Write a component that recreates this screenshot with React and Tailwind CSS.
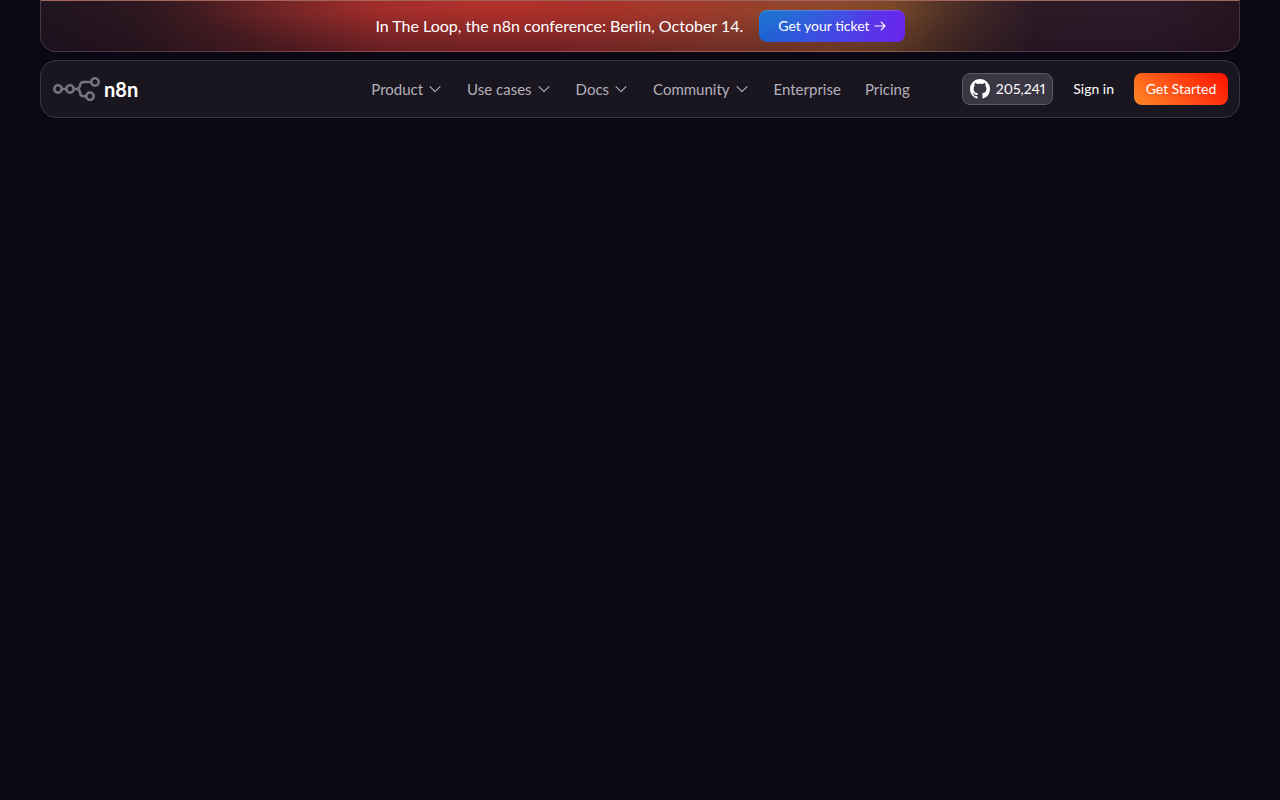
const menu = [
  { label: 'Product', hasChildren: true },
  { label: 'Use cases', hasChildren: true },
  { label: 'Docs', hasChildren: true },
  { label: 'Community', hasChildren: true },
  { label: 'Enterprise', href: '#enterprise' },
  { label: 'Pricing', href: '#pricing' },
]

function Chevron() {
  return (
    <svg viewBox="0 0 16 16" className="w-4 h-4" fill="none" stroke="currentColor" strokeWidth="1.1" strokeLinecap="round" strokeLinejoin="round" aria-hidden="true">
      <path d="M3 5.6 8 10.6l5-5" />
    </svg>
  )
}

function GithubMark() {
  return (
    <svg viewBox="0 0 16 16" className="w-5 h-5" fill="currentColor" aria-hidden="true">
      <path d="M8 0C3.58 0 0 3.58 0 8c0 3.54 2.29 6.53 5.47 7.59.4.07.55-.17.55-.38 0-.19-.01-.82-.01-1.49-2.01.37-2.53-.49-2.69-.94-.09-.23-.48-.94-.82-1.13-.28-.15-.68-.52-.01-.53.63-.01 1.08.58 1.23.82.72 1.21 1.87.87 2.33.66.07-.52.28-.87.51-1.07-1.78-.2-3.64-.89-3.64-3.95 0-.87.31-1.59.82-2.15-.08-.2-.36-1.02.08-2.12 0 0 .67-.21 2.2.82.64-.18 1.32-.27 2-.27s1.36.09 2 .27c1.53-1.04 2.2-.82 2.2-.82.44 1.1.16 1.92.08 2.12.51.56.82 1.27.82 2.15 0 3.07-1.87 3.75-3.65 3.95.29.25.54.73.54 1.48 0 1.07-.01 1.93-.01 2.2 0 .21.15.46.55.38A8.01 8.01 0 0 0 16 8c0-4.42-3.58-8-8-8Z" />
    </svg>
  )
}

function Logo() {
  return (
    <a href="#home" className="flex items-center gap-1 text-white">
      <svg viewBox="0 0 47 24" className="w-[47px] h-6 text-[#77747d]" fill="none" stroke="currentColor" strokeWidth="2.5" aria-hidden="true">
        <circle cx="5" cy="12" r="3.7" />
        <circle cx="17" cy="12" r="3.7" />
        <circle cx="42" cy="5" r="3.7" />
        <circle cx="37" cy="19.3" r="3.7" />
        <path d="M8.7 12h4.6M20.7 12h2.8c2 0 3-1 3.4-3l.2-1c.4-2 1.5-3 3.5-3h7.7M23.5 12c2 0 3 1 3.4 3l.3 1.5c.4 1.9 1.4 2.8 3.3 2.8h2.8" />
      </svg>
      <span className="text-xl leading-6 font-bold">n8n</span>
    </a>
  )
}

function Banner() {
  return (
    <aside className="relative overflow-hidden h-[52px] flex items-center justify-center gap-4 rounded-b-2xl border border-white/15 border-t-[#a2645b] bg-[linear-gradient(90deg,#1f1420_0%,#2c171f_8%,#5a2023_19%,#852828_28%,#922c29_43%,#963c2c_55%,#8f482c_66%,#7a4829_71%,#553426_75%,#3b2426_79%,#2c1a26_83%,#2c1a2a_92%,#26151f_100%)]">
      <div className="absolute inset-0 bg-[radial-gradient(ellipse_300px_60px_at_37%_0%,#d4362e88,transparent)]" />
      <div className="absolute inset-0 bg-[linear-gradient(180deg,transparent_20%,#16091850)]" />
      <p className="relative text-base leading-6 text-white">In The Loop, the n8n conference: Berlin, October 14.</p>
      <a
        href="#ticket"
        className="relative flex items-center gap-1 h-8 px-[19px] rounded-lg text-sm leading-5 text-white bg-[radial-gradient(ellipse_at_0%_0%,#1d86cf88,transparent_60%),linear-gradient(100deg,#1b66d2,#4448e4_50%,#6a23ec)] shadow-[inset_0_1px_0_#ffffff33]"
      >
        Get your ticket
        <svg viewBox="0 0 12 12" className="w-3 h-3" fill="none" stroke="currentColor" strokeWidth="1.2" strokeLinecap="round" strokeLinejoin="round" aria-hidden="true">
          <path d="M1 6h10M7.2 2.2 11 6 7.2 9.8" />
        </svg>
      </a>
    </aside>
  )
}

function Navbar() {
  return (
    <header className="h-[58px] px-3 pr-[11px] flex items-center justify-between rounded-2xl border border-[#3a3641] bg-[#1a1620]">
      <div className="flex-1 flex">
        <Logo />
      </div>

      <nav className="flex items-center gap-6 text-[15px] leading-5 text-[#b3afba]">
        {menu.map((item) =>
          item.hasChildren ? (
            <button key={item.label} type="button" className="flex items-center gap-1">
              {item.label}
              <Chevron />
            </button>
          ) : (
            <a key={item.label} href={item.href}>
              {item.label}
            </a>
          )
        )}
      </nav>

      <div className="flex-1 flex items-center justify-end gap-5 text-sm leading-5 text-white">
        <a href="#github" className="flex items-center gap-1.5 h-8 px-[7px] rounded-lg border border-[#5d5965] bg-[#3a3643] proportional-nums">
          <GithubMark />
          205,241
        </a>
        <a href="#signin">Sign in</a>
        <a href="#start" className="flex items-center justify-center w-[94px] h-8 rounded-lg bg-[linear-gradient(45deg,#ff8a24,#ff4a16_50%,#ff1200)]">
          Get Started
        </a>
      </div>
    </header>
  )
}

export default function App() {
  return (
    <div className="min-h-screen px-10 flex flex-col gap-2 bg-[#0b0714] font-['Lato',sans-serif]">
      <Banner />
      <Navbar />
    </div>
  )
}
